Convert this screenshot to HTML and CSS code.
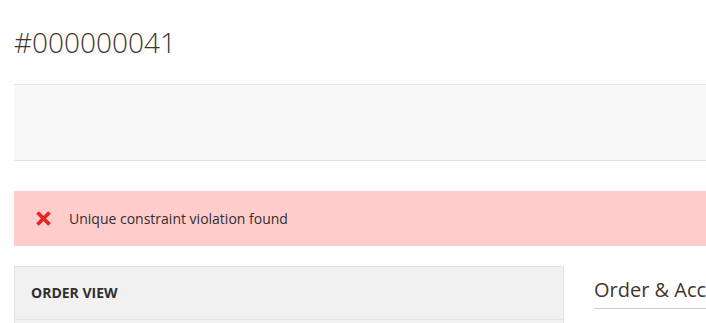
FILE: index.html
```html
<!DOCTYPE html>
<html lang="en">
<head>
<meta charset="utf-8">
<title>#000000041</title>
<link rel="stylesheet" href="styles.css">
</head>
<body>
<div class="page">
  <header class="page-header">
    <h1 class="page-title">#000000041</h1>
  </header>
  <div class="page-actions"></div>
  <div class="messages">
    <div class="message message-error">
      <svg class="message-icon" width="17" height="15" viewBox="0 0 17 15" aria-hidden="true">
        <path d="M2.5 1.5 L14.5 13.5 M14.5 1.5 L2.5 13.5" stroke="#e22626" stroke-width="3.8" stroke-linecap="butt" fill="none"/>
      </svg>
      <span class="message-text">Unique constraint violation found</span>
    </div>
  </div>
  <div class="columns">
    <aside class="side-col">
      <div class="tabs">
        <div class="tabs-title">ORDER VIEW</div>
        <div class="tabs-item"></div>
      </div>
    </aside>
    <main class="main-col">
      <h2 class="section-title">Order &amp; Account Information</h2>
    </main>
  </div>
</div>
</body>
</html>
```

FILE: styles.css
```css
html, body {
  margin: 0;
  padding: 0;
  overflow: hidden;
  background: #ffffff;
}

body {
  font-family: "Open Sans", "Liberation Sans", sans-serif;
  color: #303030;
}

.page {
  width: 1200px;
  padding-left: 14px;
}

.page-header {
  padding: 25px 0 25px 0;
}

.page-title {
  margin: 0;
  font-size: 28px;
  font-weight: 300;
  line-height: 34px;
  color: #41362f;
}

.page-actions {
  height: 75px;
  background: #f8f8f8;
  border-top: 1px solid #e3e3e3;
  border-bottom: 1px solid #e3e3e3;
}

.messages {
  margin-top: 30px;
}

.message {
  display: flex;
  align-items: center;
  gap: 17px;
  padding: 18px 40px 18px 21px;
  background: #ffcccc;
  font-size: 14px;
  line-height: 19px;
  color: #303030;
}

.message-icon {
  flex: none;
  display: block;
}

.columns {
  margin-top: 20px;
  display: grid;
  grid-template-columns: 550px 1fr;
  column-gap: 30px;
}

.tabs {
  background: #f1f1f1;
  border: 1px solid #e3e3e3;
}

.tabs-title {
  padding: 16px 16px 16px 16px;
  font-size: 14px;
  font-weight: 700;
  line-height: 20px;
  color: #303030;
  border-bottom: 1px solid #e3e3e3;
}

.tabs-item {
  height: 60px;
}

.section-title {
  margin: 10px 0 0 0;
  padding-bottom: 4px;
  font-size: 20px;
  font-weight: 400;
  line-height: 28px;
  color: #41362f;
  border-bottom: 1px solid #cccccc;
  white-space: nowrap;
}
```
